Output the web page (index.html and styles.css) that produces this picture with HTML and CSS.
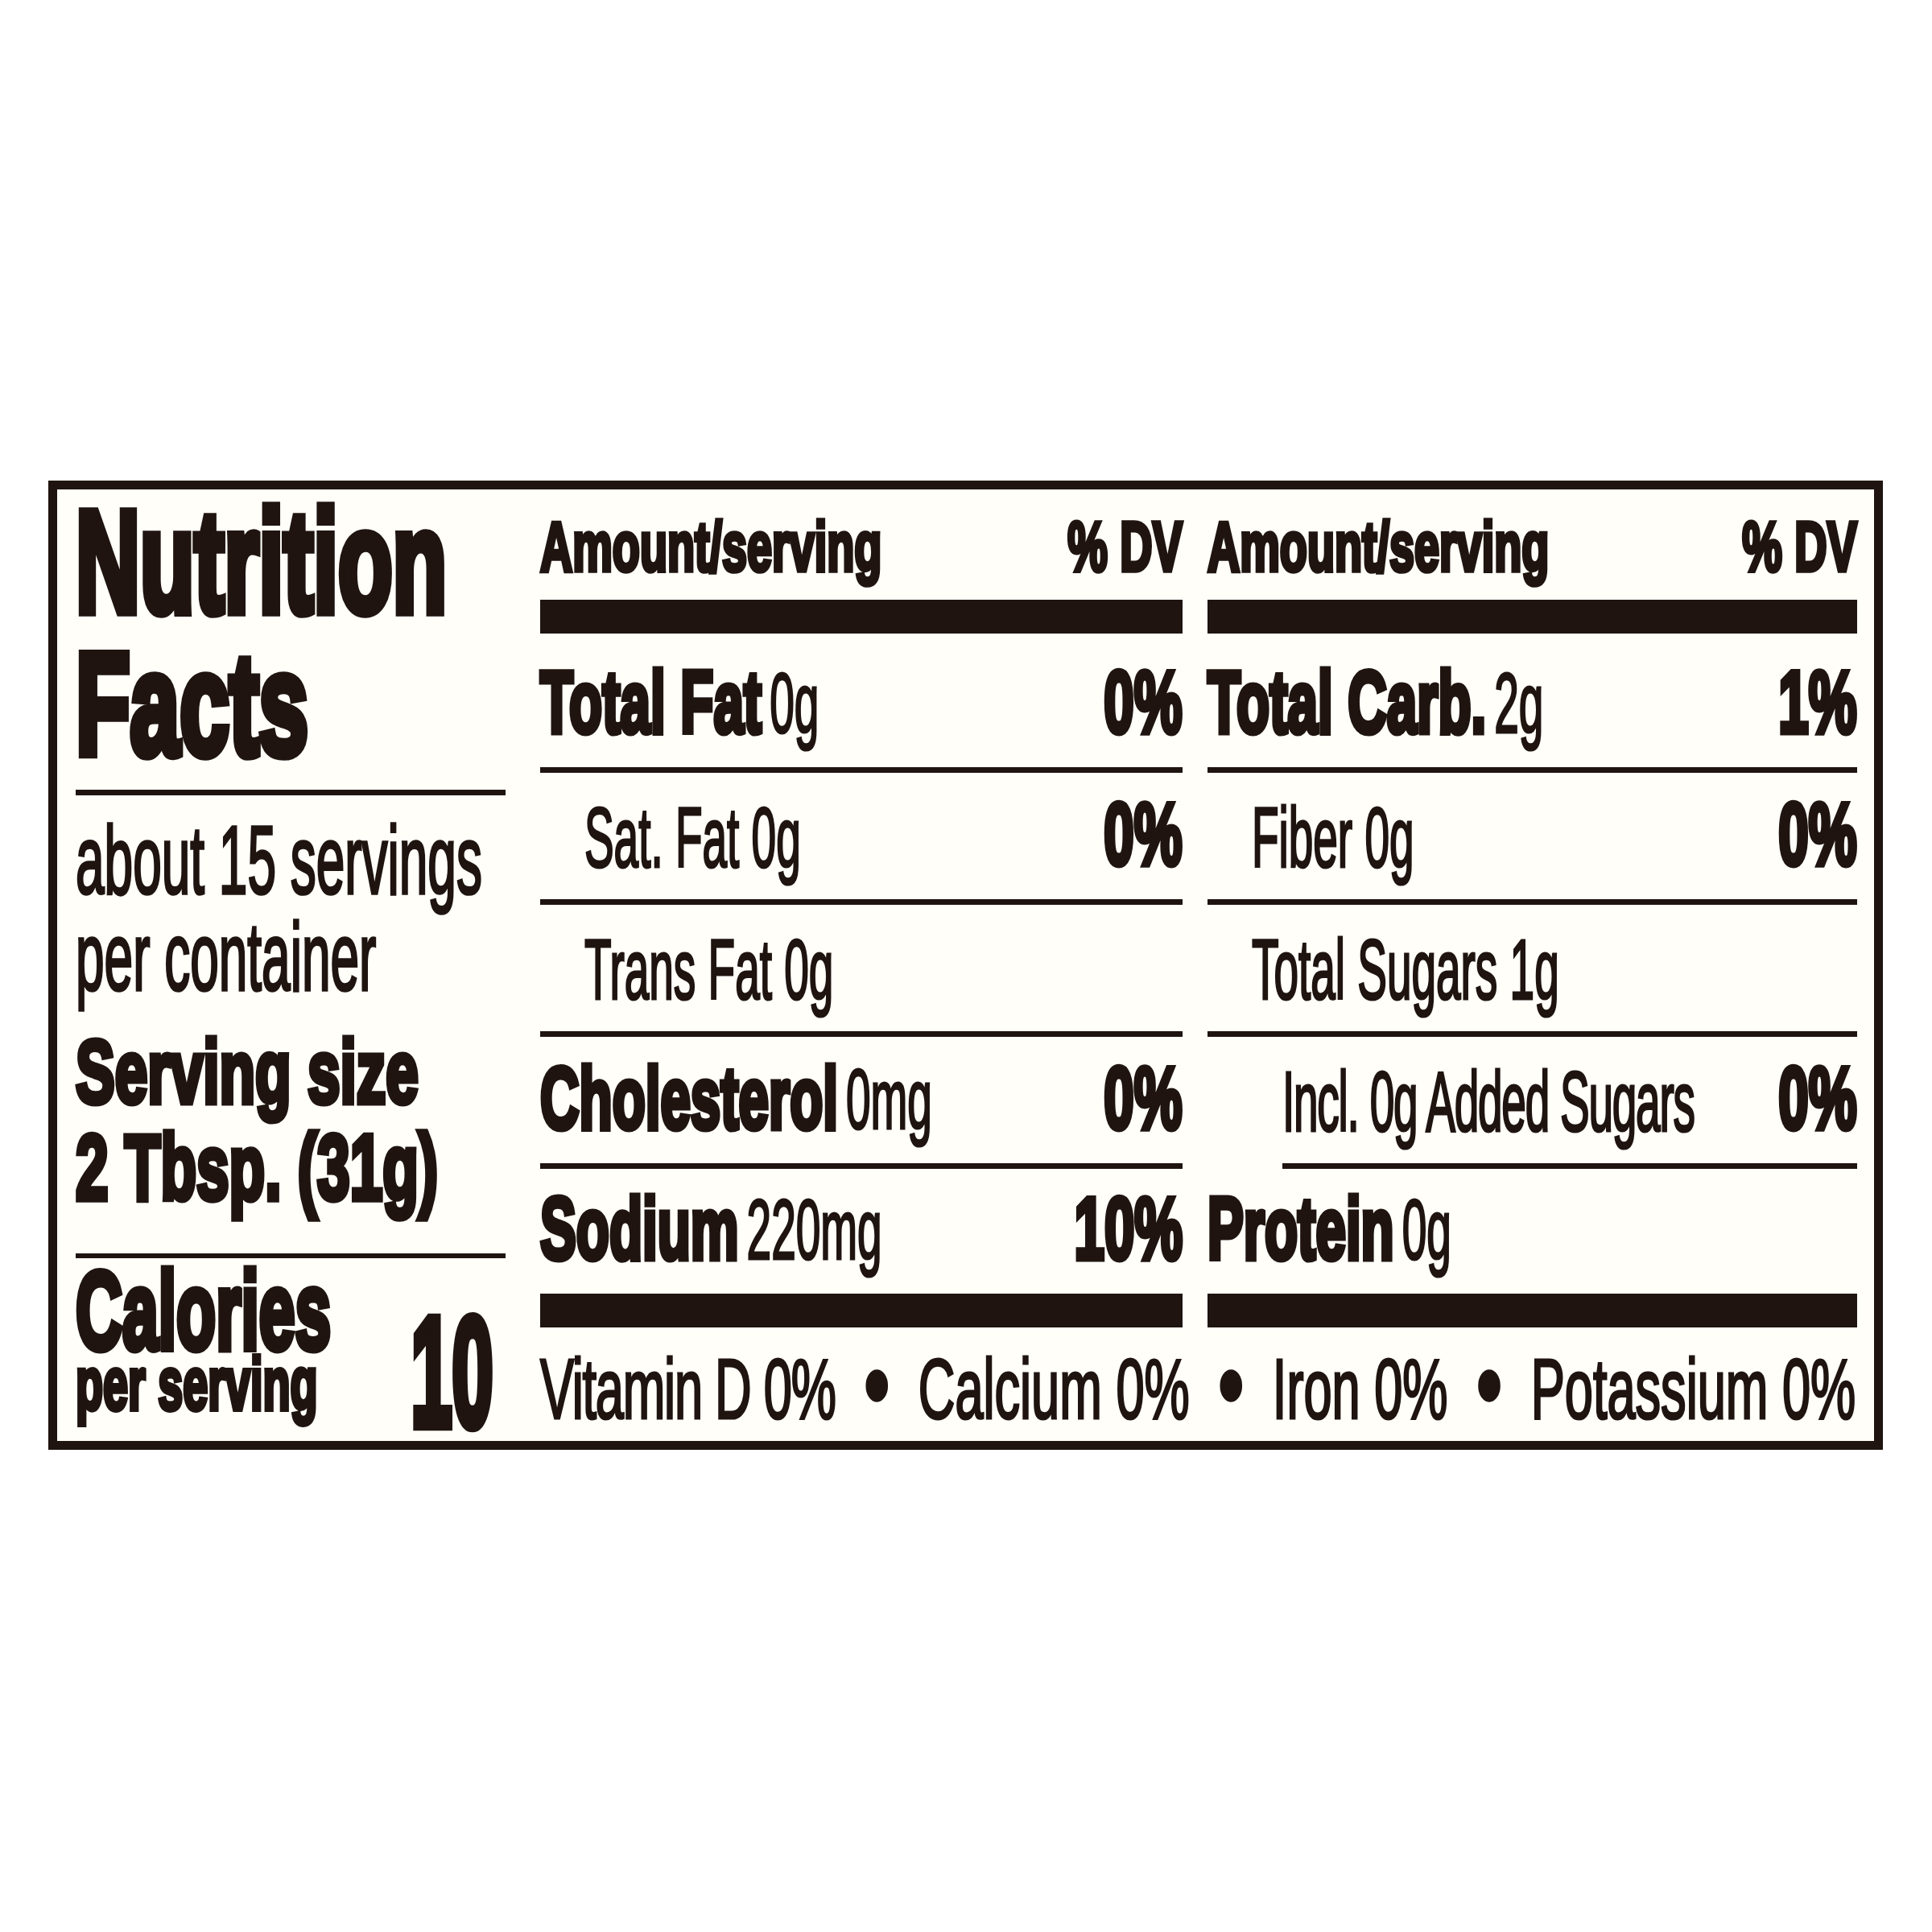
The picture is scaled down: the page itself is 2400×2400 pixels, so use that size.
FILE: index.html
```html
<!DOCTYPE html>
<html lang="en">
<head>
<meta charset="utf-8">
<title>Nutrition Facts</title>
<link rel="stylesheet" href="styles.css">
</head>
<body>
<section class="label">
  <div class="side">
    <h1 class="title">
      <span class="ln ln-title1"><span class="t b xl">Nutrition</span></span>
      <span class="ln ln-title2"><span class="t b xl">Facts</span></span>
    </h1>
    <hr class="rule rule-top">
    <p class="block">
      <span class="ln ln-about"><span class="t r serv">about 15 servings</span></span>
      <span class="ln ln-per"><span class="t r serv">per container</span></span>
    </p>
    <p class="block">
      <span class="ln ln-size"><span class="t b size">Serving size</span></span>
      <span class="ln ln-tbsp"><span class="t b size size-qty">2 Tbsp. (31g)</span></span>
    </p>
    <hr class="rule rule-cal">
    <div class="calories">
      <div class="cal-label">
        <span class="ln ln-cal"><span class="t b cal">Calories</span></span>
        <span class="ln ln-perserv"><span class="t b perserv">per serving</span></span>
      </div>
      <span class="t b big end">10</span>
    </div>
  </div>

  <div class="head">
    <span class="t b hd">Amount/serving</span>
    <span class="t b hd end">% DV</span>
  </div>
  <div class="head">
    <span class="t b hd">Amount/serving</span>
    <span class="t b hd end">% DV</span>
  </div>

  <div class="bar"></div>
  <div class="bar"></div>

  <div class="row">
    <span class="item"><span class="t b nm">Total Fat</span> <span class="t r am">0g</span></span>
    <span class="t b pct end">0%</span>
  </div>
  <div class="row">
    <span class="item"><span class="t b nm">Total Carb.</span> <span class="t r am">2g</span></span>
    <span class="t b pct end">1%</span>
  </div>

  <div class="row">
    <span class="item sub"><span class="t r am">Sat. Fat 0g</span></span>
    <span class="t b pct end">0%</span>
  </div>
  <div class="row">
    <span class="item sub"><span class="t r am">Fiber 0g</span></span>
    <span class="t b pct end">0%</span>
  </div>

  <div class="row">
    <span class="item sub"><span class="t r am">Trans Fat 0g</span></span>
  </div>
  <div class="row">
    <span class="item sub"><span class="t r am">Total Sugars 1g</span></span>
  </div>

  <div class="row">
    <span class="item"><span class="t b nm">Cholesterol</span> <span class="t r am">0mg</span></span>
    <span class="t b pct end">0%</span>
  </div>
  <div class="row row-added">
    <span class="item"><span class="t r am tight">Incl. 0g Added Sugars</span></span>
    <span class="t b pct end">0%</span>
  </div>

  <div class="row row-last">
    <span class="item"><span class="t b nm">Sodium</span> <span class="t r am">220mg</span></span>
    <span class="t b pct end">10%</span>
  </div>
  <div class="row row-last">
    <span class="item"><span class="t b nm">Protein</span> <span class="t r am">0g</span></span>
  </div>

  <div class="bar"></div>
  <div class="bar"></div>

  <div class="vitamins">
    <div class="vit-line">
      <span class="t r vit tight">Vitamin D 0%</span>
      <span class="t b dot">•</span>
      <span class="t r vit">Calcium 0%</span>
      <span class="t b dot">•</span>
      <span class="t r vit">Iron 0%</span>
      <span class="t b dot">•</span>
      <span class="t r vit">Potassium 0%</span>
    </div>
  </div>
</section>
</body>
</html>
```

FILE: styles.css
```css
* {
  box-sizing: border-box;
}

html,
body {
  margin: 0;
  padding: 0;
  background: #ffffff;
}

body {
  font-family: "Liberation Sans", Arial, sans-serif;
  color: #1f1410;
}

/* ---------- panel ---------- */
.label {
  display: grid;
  grid-template-columns: 546px 798px 807px;
  grid-template-rows: 137px 42px 173px 164px 164px 164px 155px 42px 141px;
  column-gap: 31px;
  width: 2279px;
  height: 1204px;
  margin: 597px 0 0 60px;
  padding: 0 21px 0 23px;
  border: 11px solid #1f1410;
  background: #fffef9;
}

/* ---------- text runs (condensed type: narrowed horizontally, drawn tall) ---------- */
.t {
  --sx: 0.82;
  --k: 1;
  display: inline-block;
  line-height: 1;
  white-space: nowrap;
  transform: scale(var(--sx), var(--k));
  transform-origin: 0 84.65%;
}

.t.end {
  transform-origin: 100% 84.65%;
}

.b {
  font-weight: 700;
  -webkit-text-stroke: 0.065em currentColor;
}

.r {
  font-weight: 400;
  -webkit-text-stroke: 0.03em currentColor;
}

.xl { font-size: 135px; --k: 1.33; }
.serv { font-size: 78px; --k: 1.55; }
.size { font-size: 89px; --k: 1.25; }
.size-qty { --k: 1.3; }
.cal { font-size: 98px; --k: 1.4; }
.perserv { font-size: 68px; --k: 1.35; }
.big { font-size: 112px; --k: 1.73; }
.hd { font-size: 68px; --k: 1.27; }
.nm { font-size: 82px; --k: 1.34; }
.am { font-size: 67px; --k: 1.58; }
.pct { font-size: 82px; --k: 1.34; flex-shrink: 0; }
.vit { font-size: 77px; --k: 1.38; }
.dot { font-size: 96px; --k: 1.2; }
.tight { letter-spacing: -1.5px; }

/* ---------- left column ---------- */
.side {
  grid-row: 1 / -1;
  grid-column: 1;
  margin-right: 12px;
  display: flex;
  flex-direction: column;
}

.title,
.block {
  margin: 0;
  font-size: 20px;
  font-weight: 400;
}

.ln {
  display: flex;
  align-items: flex-end;
}

.ln-title1 { height: 173px; }
.ln-title2 { height: 177px; }
.ln-about { height: 134px; }
.ln-per { height: 120px; }
.ln-size { height: 142px; }
.ln-tbsp { height: 120px; }
.ln-cal { height: 128px; }
.ln-perserv { height: 70px; }

.rule {
  margin: 0;
  border: 0;
  height: 7px;
  background: #1f1410;
}

.rule-top { margin-top: 23px; }
.rule-cal { margin-top: 53px; height: 6px; }

.calories {
  flex: 1;
  display: flex;
  justify-content: space-between;
  align-items: flex-end;
  padding-right: 15px;
}

.cal-label {
  display: flex;
  flex-direction: column;
  padding-bottom: 29px;
}

/* ---------- nutrient columns ---------- */
.head {
  display: flex;
  justify-content: space-between;
  align-items: flex-end;
  padding-bottom: 26px;
}

.bar {
  background: #1f1410;
}

.row {
  display: flex;
  justify-content: space-between;
  align-items: flex-end;
  padding-bottom: 30px;
  border-bottom: 7px solid #1f1410;
}

.row-last {
  border-bottom: 0;
}

.row-added {
  margin-left: 93px;
}

/* a name + amount group is narrowed as a whole so the two runs stay together */
.item {
  min-width: 0;
  font-size: 44px;
  transform: scaleX(0.82);
  transform-origin: 0 100%;
}

.item .t {
  --sx: 1;
}

.item.sub {
  padding-left: 67px;
}

/* ---------- footer ---------- */
.vitamins {
  grid-column: 2 / 4;
  display: flex;
  align-items: flex-end;
  padding-bottom: 16px;
}

.vit-line {
  flex: none;
  width: 1993px;
  display: flex;
  justify-content: space-between;
  align-items: flex-end;
  transform: scaleX(0.82);
  transform-origin: 0 100%;
}

.vit-line .t {
  --sx: 1;
}
```
